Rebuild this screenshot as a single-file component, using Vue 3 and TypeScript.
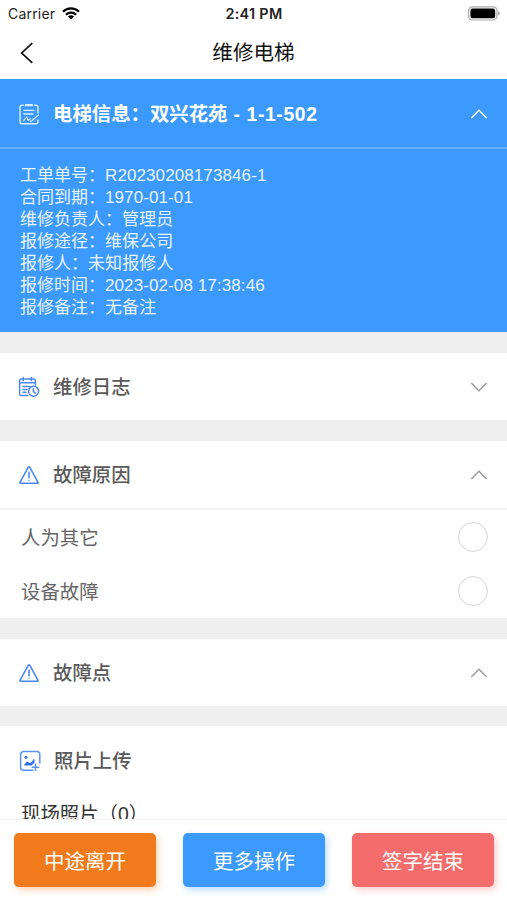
<script setup lang="ts">
import { ref } from 'vue'

interface InfoLine {
  label: string
  value: string
}

const info: InfoLine[] = [
  { label: '工单单号', value: 'R20230208173846-1' },
  { label: '合同到期', value: '1970-01-01' },
  { label: '维修负责人', value: '管理员' },
  { label: '报修途径', value: '维保公司' },
  { label: '报修人', value: '未知报修人' },
  { label: '报修时间', value: '2023-02-08 17:38:46' },
  { label: '报修备注', value: '无备注' },
]

const causes: string[] = ['人为其它', '设备故障']
const selected = ref<string | null>(null)
const infoOpen = ref(true)
const logOpen = ref(false)
const causeOpen = ref(true)
const pointOpen = ref(true)
</script>

<template>
  <div class="screen">
    <header class="status">
      <div class="carrier">
        <span>Carrier</span>
        <svg class="wifi" viewBox="0 0 18 13" width="18" height="13">
          <g fill="none" stroke="#000" stroke-width="2.2">
            <path d="M1 4.7a11.4 11.4 0 0 1 16 0" />
            <path d="M3.9 7.7a7.3 7.3 0 0 1 10.2 0" />
          </g>
          <path d="M9 12.6 5.9 9.5a4.4 4.4 0 0 1 6.2 0z" fill="#000" />
        </svg>
      </div>
      <div class="clock">2:41 PM</div>
      <div class="power">
        <svg viewBox="0 0 33 15" width="33" height="15">
          <rect x="1.600" y=".8" width="28.400" height="13.2" rx="4" fill="#fff" stroke="#aaa" stroke-width="1.2" />
          <rect x="3.400" y="2.6" width="24.800" height="9.6" rx="2.3" fill="#000" />
          <path d="M31.200 5v4.6q1.4-.7 1.4-2.3T31.200 5z" fill="#999" />
        </svg>
      </div>
    </header>

    <nav class="nav">
      <svg class="back" viewBox="0 0 14 22" width="14" height="22">
        <path d="M12.3 1.2 1.7 11l10.6 9.8" fill="none" stroke="#111" stroke-width="1.7" />
      </svg>
      <h1>维修电梯</h1>
    </nav>

    <main class="content">
      <section class="card info">
        <div class="head" @click="infoOpen = !infoOpen">
          <svg class="icon" viewBox="0 0 22 22" width="22" height="22" fill="none" stroke="#dceeff" stroke-width="1.4" stroke-linecap="round" stroke-linejoin="round">
            <path d="M5.2 2.2H4a2 2 0 0 0-2 2v14.6a2 2 0 0 0 2 2h14a2 2 0 0 0 2-2V17M16.8 2.2H18a2 2 0 0 1 2 2V10" />
            <path d="M7.8 2.2h6.4" stroke-width="2.2" />
            <path d="M6 7.4h10M6 11h9" />
            <path d="M5.500 17.600l3.200-3.400 1.600 3.200 2-1.600M20.400 12l-6.600 5.800-1.600.4" stroke-width="1.2" />
          </svg>
          <h2>电梯信息：双兴花苑<span class="unit"> - 1-1-502</span></h2>
          <svg class="chev" :class="{ down: !infoOpen }" viewBox="0 0 18 10" width="18" height="10"><path d="M1.3 9 9 1.3 16.7 9" /></svg>
        </div>
        <div v-if="infoOpen" class="lines">
          <p v-for="line in info" :key="line.label">{{ line.label }}：<span class="value">{{ line.value }}</span></p>
        </div>
      </section>

      <section class="card log">
        <div class="head" @click="logOpen = !logOpen">
          <svg class="icon" viewBox="0 0 22 22" width="22" height="22" fill="none" stroke="#4b87f5" stroke-width="1.5" stroke-linecap="round">
            <path d="M10 19.500H3.200a1.600 1.600 0 0 1-1.600-1.600V4.600A1.600 1.600 0 0 1 3.200 3h12.600a1.600 1.600 0 0 1 1.600 1.600V9" />
            <path d="M5.2 1.4v3.2M13.4 1.4v3.2M2 6.8h15M5 10.6h7M5 13.4h4M5 16.3h3" />
            <circle cx="15.6" cy="15.2" r="5" />
            <path d="M15.4 12.4v3.2l2 1.5" />
          </svg>
          <h2>维修日志</h2>
          <svg class="chev" :class="{ down: !logOpen }" viewBox="0 0 18 10" width="18" height="10"><path d="M1.3 9 9 1.3 16.7 9" /></svg>
        </div>
      </section>

      <section class="card cause">
        <div class="head" @click="causeOpen = !causeOpen">
          <svg class="icon" viewBox="0 0 22 22" width="22" height="22" fill="none" stroke="#4b87f5" stroke-width="1.6" stroke-linejoin="round" stroke-linecap="round">
            <path d="M10.3 3.2 2 18.3q-.4 1 .6 1h16.800q1 0 .6-1L11.7 3.2q-.7-1-1.400 0z" />
            <path d="M11 8v5.8M11 16.2v.1" />
          </svg>
          <h2>故障原因</h2>
          <svg class="chev" :class="{ down: !causeOpen }" viewBox="0 0 18 10" width="18" height="10"><path d="M1.3 9 9 1.3 16.7 9" /></svg>
        </div>
        <div v-if="causeOpen" class="options">
          <div v-for="cause in causes" :key="cause" class="option" @click="selected = cause">
            <span class="name">{{ cause }}</span>
            <i class="radio" :class="{ on: selected === cause }"></i>
          </div>
        </div>
      </section>

      <section class="card point">
        <div class="head" @click="pointOpen = !pointOpen">
          <svg class="icon" viewBox="0 0 22 22" width="22" height="22" fill="none" stroke="#4b87f5" stroke-width="1.6" stroke-linejoin="round" stroke-linecap="round">
            <path d="M10.3 3.2 2 18.3q-.4 1 .6 1h16.800q1 0 .6-1L11.7 3.2q-.7-1-1.400 0z" />
            <path d="M11 8v5.8M11 16.2v.1" />
          </svg>
          <h2>故障点</h2>
          <svg class="chev" :class="{ down: !pointOpen }" viewBox="0 0 18 10" width="18" height="10"><path d="M1.3 9 9 1.3 16.7 9" /></svg>
        </div>
      </section>

      <section class="card photos">
        <div class="head">
          <svg class="icon" viewBox="0 0 22 22" width="22" height="22" fill="none" stroke="#5a92f8" stroke-width="1.5" stroke-linecap="round">
            <path d="M14 20.200H4.600a3 3 0 0 1-3-3V4.500a3 3 0 0 1 3-3h13.200a3 3 0 0 1 3 3V13" />
            <path d="M13.2 17.2h6.6M16.5 13.9v6.6" />
            <circle cx="7" cy="7.2" r="1.5" fill="#2f6ff0" stroke="none" />
            <path d="M4.700 15.500 8 11.300l2.300 1.800q2.800-.4 4.700-4.500.8 1.300.5 3.900l-2.900 3z" fill="#2f6ff0" stroke="none" />
          </svg>
          <h2>照片上传</h2>
        </div>
        <p class="sub">现场照片（0）</p>
      </section>
    </main>

    <footer class="actions">
      <button class="btn leave">中途离开</button>
      <button class="btn more">更多操作</button>
      <button class="btn sign">签字结束</button>
    </footer>
  </div>
</template>

<style>
body {
  margin: 0;
  overflow: hidden;
}
</style>

<style scoped>
.screen {
  display: flex;
  flex-direction: column;
  height: 900px;
  overflow: hidden;
  background: #fff;
  font-family: 'Liberation Sans', 'Noto Sans CJK SC', sans-serif;
}
h1,
h2,
p {
  margin: 0;
}
.status {
  flex: none;
  display: grid;
  grid-template-columns: 1fr auto 1fr;
  align-items: center;
  height: 27px;
  padding: 0 7px 0 8px;
  font-family: Inter, sans-serif;
  font-size: 14px;
  color: #222;
}
.carrier {
  display: flex;
  align-items: center;
  gap: 7px;
  letter-spacing: 0.2px;
}
.clock {
  font-weight: 600;
  font-size: 14.4px;
  letter-spacing: 0.3px;
}
.power {
  display: flex;
  justify-content: flex-end;
}
.nav {
  flex: none;
  display: grid;
  grid-template-columns: 1fr auto 1fr;
  align-items: center;
  height: 52px;
  padding: 0 20px;
  box-sizing: border-box;
}
h1 {
  font-size: 20.6px;
  font-weight: 400;
  line-height: 30px;
  color: #111;
}
.content {
  flex: 1;
  min-height: 0;
  overflow: hidden;
  display: flex;
  flex-direction: column;
  gap: 21px;
  background: #efefef;
}
.card {
  flex: none;
  background: #fff;
}
.head {
  display: flex;
  align-items: center;
  height: 67px;
  padding: 0 19px 0 18px;
}
.icon {
  flex: none;
  margin-right: 13px;
}
h2 {
  flex: 1;
  font-size: 19.4px;
  line-height: 28px;
  font-weight: 500;
  color: #5a5a5a;
}
.chev {
  fill: none;
  stroke: #999;
  stroke-width: 1.4;
}
.chev.down {
  transform: rotate(180deg);
}
.info {
  background: #3c9aff;
  color: #fff;
  height: 253px;
}
.info .head {
  height: 70px;
  padding-top: 2px;
  border-bottom: 2px solid #62aeff;
  box-sizing: border-box;
}
.info h2 {
  color: #fff;
  font-weight: 700;
}
.unit {
  letter-spacing: 0.6px;
}
.info .chev {
  stroke: #fff;
}
.lines {
  padding: 16px 20px 0;
  font-size: 17px;
  line-height: 22px;
  color: #e9f4ff;
}
.value {
  letter-spacing: 0.1px;
}
.cause {
  height: 177px;
}
.cause .head {
  border-bottom: 2px solid #f3f3f3;
}
.option {
  display: flex;
  align-items: center;
  justify-content: space-between;
  height: 54px;
  padding: 0 19px 0 21px;
  font-size: 19.4px;
  color: #666;
}
.name {
  margin-bottom: 2px;
}
.radio {
  width: 30px;
  height: 30px;
  box-sizing: border-box;
  border: 1.5px solid #d4d4d4;
  border-radius: 50%;
}
.radio.on {
  border: 9px solid #3c9aff;
}
.photos {
  height: 200px;
  margin-top: -1px;
}
.photos .head {
  padding-top: 1px;
}
.photos .icon {
  margin-left: 1px;
}
.sub {
  padding: 6px 21px;
  font-size: 19.4px;
  line-height: 28px;
  color: #333;
}
.actions {
  flex: none;
  display: flex;
  gap: 27px;
  height: 81px;
  padding: 13px 13px 0 14px;
  box-sizing: border-box;
  border-top: 1px solid #f3f3f3;
  background: #fff;
}
.btn {
  flex: 1;
  height: 54px;
  padding: 3px 0 0;
  border: 0;
  border-radius: 5px;
  font-family: inherit;
  font-size: 20.5px;
  line-height: 51px;
  color: #fff;
}
.leave {
  background: #f17b1c;
  box-shadow: 2px 3px 7px rgba(241, 123, 28, 0.35);
}
.more {
  background: #3c9aff;
  box-shadow: 2px 3px 7px rgba(60, 154, 255, 0.35);
}
.sign {
  background: #f56c6c;
  box-shadow: 2px 3px 7px rgba(245, 108, 108, 0.35);
}
</style>
